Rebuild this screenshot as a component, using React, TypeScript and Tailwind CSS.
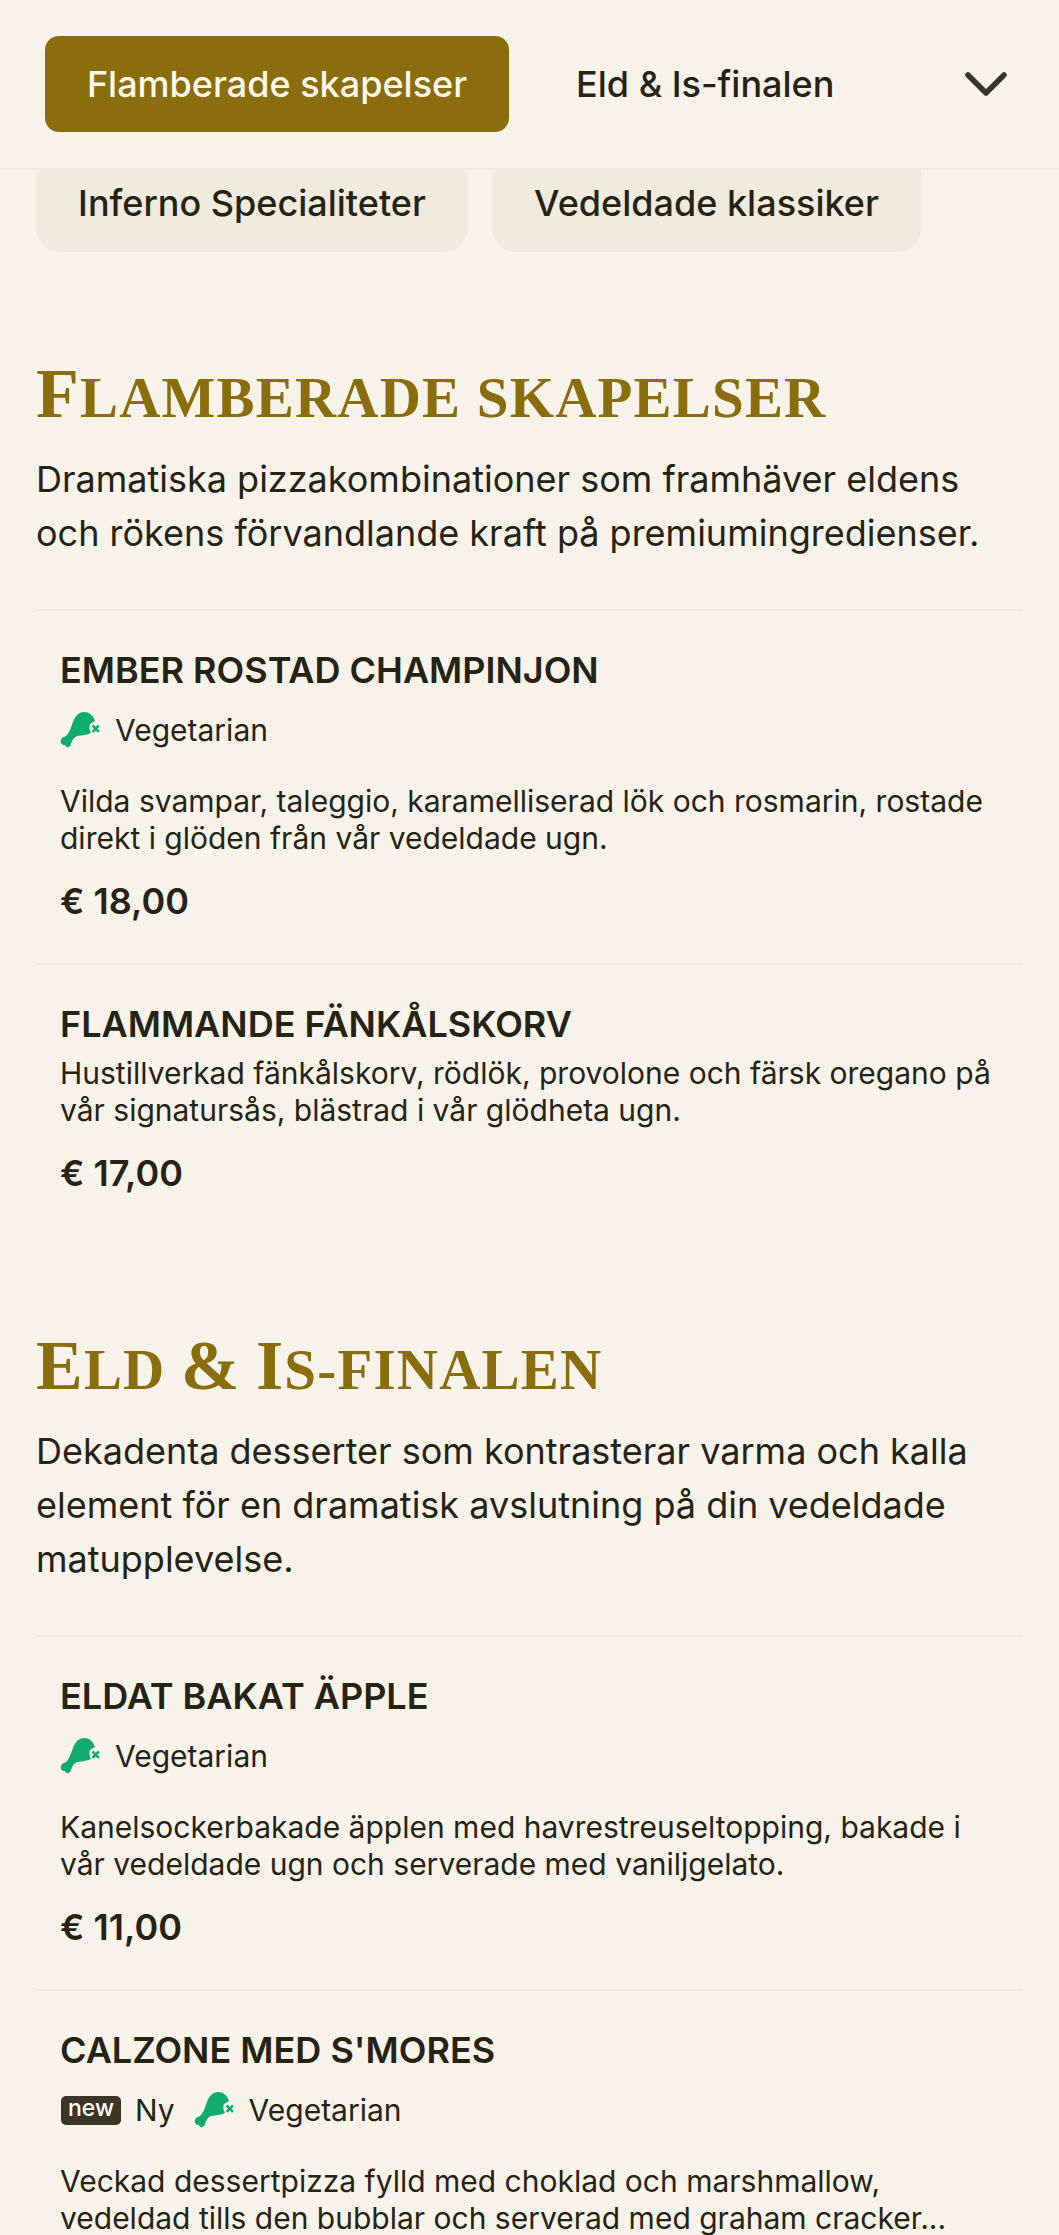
const FONT = "font-['Inter','Liberation_Sans',sans-serif]"

function VegIcon() {
  return (
    <svg viewBox="0 0 42 36" className="w-[42px] h-[36px] shrink-0">
      <path
        d="M1 28C2 25 4 25 6 24C10 20 11 15 13 10C15 4 19 0 24 0C29 0 33 3 35 9L30 12C29 15 29 18 31 21C26 23.5 20 23 16 24.5C13 26 12 29 11 32C10 36 6 36 5 33C2 33 0 31 1 28Z"
        fill="#10AC6E"
      />
      <path d="M32.6 13.5L38.9 19.8M38.9 13.5L32.6 19.8" stroke="#10AC6E" strokeWidth="2.5" fill="none" />
    </svg>
  )
}

function Veg() {
  return (
    <div className="flex items-center gap-[13px]">
      <VegIcon />
      <span className="text-[30px] leading-[40px]">Vegetarian</span>
    </div>
  )
}

function NewTag() {
  return (
    <div className="flex items-center gap-[14px]">
      <span className="flex items-center justify-center w-[60px] h-[29px] ml-px rounded-[5px] bg-[#3b3626] text-white text-[23px] leading-none font-medium pb-[3px]">
        new
      </span>
      <span className="text-[30px] leading-[40px]">Ny</span>
    </div>
  )
}

type Item = {
  name: string
  isNew?: boolean
  veg?: boolean
  desc: string[]
  price?: string
}

function MenuItem({ item }: { item: Item }) {
  const tagged = item.veg || item.isNew
  return (
    <div className="border-t-2 border-[#efebe2] px-6 pt-[36px]">
      <h3 className="text-[36px] leading-[46px] font-semibold">{item.name}</h3>
      {tagged && (
        <div className="flex items-center gap-[19px] mt-[17px] mb-[33px] h-[40px]">
          {item.isNew && <NewTag />}
          {item.veg && <Veg />}
        </div>
      )}
      <p className={`text-[30px] leading-[37px] ${tagged ? '' : 'mt-[8px]'}`}>
        {item.desc.map((line) => (
          <span key={line} className="block whitespace-nowrap">{line}</span>
        ))}
      </p>
      {item.price && (
        <p className="text-[36px] leading-[48px] font-semibold mt-[20px] pb-[38px]">{item.price}</p>
      )}
    </div>
  )
}

function Section({ title, lines, items }: { title: [string, string][]; lines: string[]; items: Item[] }) {
  return (
    <section>
      {/* first letters stay large, the rest is set as smaller capitals */}
      <h2 className="font-['Liberation_Serif',serif] font-bold text-[#8a6d0c] text-[70px] leading-[72px] tracking-[1.2px] whitespace-nowrap">
        {title.map(([big, rest]) => (
          <span key={big + rest}>
            {big}
            <span className="text-[57px] uppercase">{rest}</span>
          </span>
        ))}
      </h2>
      <p className="text-[36px] leading-[54px] mt-[18px] mb-[49px]">
        {lines.map((line) => (
          <span key={line} className="block whitespace-nowrap">{line}</span>
        ))}
      </p>
      {items.map((item) => (
        <MenuItem key={item.name} item={item} />
      ))}
    </section>
  )
}

const first: Item[] = [
  {
    name: 'EMBER ROSTAD CHAMPINJON',
    veg: true,
    desc: [
      'Vilda svampar, taleggio, karamelliserad lök och rosmarin, rostade',
      'direkt i glöden från vår vedeldade ugn.',
    ],
    price: '€ 18,00',
  },
  {
    name: 'FLAMMANDE FÄNKÅLSKORV',
    desc: [
      'Hustillverkad fänkålskorv, rödlök, provolone och färsk oregano på',
      'vår signatursås, blästrad i vår glödheta ugn.',
    ],
    price: '€ 17,00',
  },
]

const second: Item[] = [
  {
    name: 'ELDAT BAKAT ÄPPLE',
    veg: true,
    desc: [
      'Kanelsockerbakade äpplen med havrestreuseltopping, bakade i',
      'vår vedeldade ugn och serverade med vaniljgelato.',
    ],
    price: '€ 11,00',
  },
  {
    name: "CALZONE MED S'MORES",
    isNew: true,
    veg: true,
    desc: [
      'Veckad dessertpizza fylld med choklad och marshmallow,',
      'vedeldad tills den bubblar och serverad med graham cracker...',
    ],
  },
]

export default function App() {
  return (
    <div className={`${FONT} h-[2235px] overflow-hidden bg-[#f7f3eb] text-[#262314]`}>
      <header className="h-[170px] border-b-2 border-[#efebe2] flex items-center pl-[45px] pr-[51px]">
        <button className="w-[464px] h-[96px] rounded-[14px] bg-[#8a6d0c] text-[#fbf7ec] text-[36px] font-medium">
          Flamberade skapelser
        </button>
        <span className="ml-[67px] text-[36px] font-medium">Eld &amp; Is-finalen</span>
        <svg viewBox="0 0 44 26" className="ml-auto w-[44px] h-[26px]" fill="none">
          <path d="M4 4L22 22L40 4" stroke="#3a3528" strokeWidth="5.5" strokeLinecap="round" strokeLinejoin="round" />
        </svg>
      </header>

      <div className="px-9">
        <div className="flex gap-6 h-[82px]">
          <div className="w-[432px] rounded-b-[24px] bg-[#efebdf] pt-[10px] text-center text-[36px] leading-[46px] font-medium">
            Inferno Specialiteter
          </div>
          <div className="w-[429px] rounded-b-[24px] bg-[#efebdf] pt-[10px] text-center text-[36px] leading-[46px] font-medium">
            Vedeldade klassiker
          </div>
        </div>

        <div className="mt-[106px] flex flex-col gap-[95px]">
          <Section
            title={[['F', 'lamberade '], ['', 'skapelser']]}
            lines={[
              'Dramatiska pizzakombinationer som framhäver eldens',
              'och rökens förvandlande kraft på premiumingredienser.',
            ]}
            items={first}
          />
          <Section
            title={[['E', 'ld '], ['&', ' '], ['I', 's-finalen']]}
            lines={[
              'Dekadenta desserter som kontrasterar varma och kalla',
              'element för en dramatisk avslutning på din vedeldade',
              'matupplevelse.',
            ]}
            items={second}
          />
        </div>
      </div>
    </div>
  )
}
